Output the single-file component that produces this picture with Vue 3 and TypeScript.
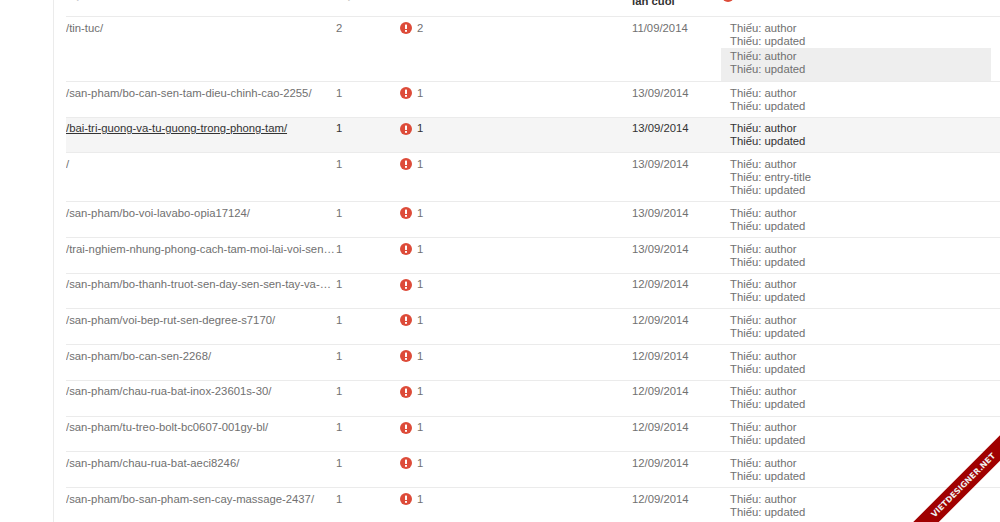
<script setup lang="ts">
interface Row {
  url: string
  pages: number
  errors: number
  date: string
  issues: string[][]
  hover?: boolean
}

const pair = ['Thiếu: author', 'Thiếu: updated']

const rows: Row[] = [
  { url: '/tin-tuc/', pages: 2, errors: 2, date: '11/09/2014', issues: [pair, pair] },
  { url: '/san-pham/bo-can-sen-tam-dieu-chinh-cao-2255/', pages: 1, errors: 1, date: '13/09/2014', issues: [pair] },
  { url: '/bai-tri-guong-va-tu-guong-trong-phong-tam/', pages: 1, errors: 1, date: '13/09/2014', issues: [pair], hover: true },
  { url: '/', pages: 1, errors: 1, date: '13/09/2014', issues: [['Thiếu: author', 'Thiếu: entry-title', 'Thiếu: updated']] },
  { url: '/san-pham/bo-voi-lavabo-opia17124/', pages: 1, errors: 1, date: '13/09/2014', issues: [pair] },
  { url: '/trai-nghiem-nhung-phong-cach-tam-moi-lai-voi-sen-tam-cay/', pages: 1, errors: 1, date: '13/09/2014', issues: [pair] },
  { url: '/san-pham/bo-thanh-truot-sen-day-sen-sen-tay-va-gia-do/', pages: 1, errors: 1, date: '12/09/2014', issues: [pair] },
  { url: '/san-pham/voi-bep-rut-sen-degree-s7170/', pages: 1, errors: 1, date: '12/09/2014', issues: [pair] },
  { url: '/san-pham/bo-can-sen-2268/', pages: 1, errors: 1, date: '12/09/2014', issues: [pair] },
  { url: '/san-pham/chau-rua-bat-inox-23601s-30/', pages: 1, errors: 1, date: '12/09/2014', issues: [pair] },
  { url: '/san-pham/tu-treo-bolt-bc0607-001gy-bl/', pages: 1, errors: 1, date: '12/09/2014', issues: [pair] },
  { url: '/san-pham/chau-rua-bat-aeci8246/', pages: 1, errors: 1, date: '12/09/2014', issues: [pair] },
  { url: '/san-pham/bo-san-pham-sen-cay-massage-2437/', pages: 1, errors: 1, date: '12/09/2014', issues: [pair] },
]
</script>

<template>
  <div class="viewport">
    <main class="panel">
      <div class="row head">
        <div class="one">Nội dung</div>
        <div class="one">Mục</div>
        <div class="one err-head">Có lỗi (số)</div>
        <div>Phát hiện<br />lần cuối</div>
        <div class="head-icon"><span class="head-dot"></span></div>
      </div>
      <div v-for="r in rows" :key="r.url" class="row" :class="{ hover: r.hover }">
        <div class="url">{{ r.url }}</div>
        <div>{{ r.pages }}</div>
        <div class="err">
          <svg class="icon" viewBox="0 0 12 12" aria-hidden="true">
            <circle cx="6" cy="6" r="6" fill="#dd4b39" />
            <rect x="5" y="2.4" width="2" height="4.6" rx=".5" fill="#fff" />
            <rect x="5" y="8" width="2" height="1.8" fill="#fff" />
          </svg>
          <span>{{ r.errors }}</span>
        </div>
        <div>{{ r.date }}</div>
        <div class="issues">
          <div v-for="(g, i) in r.issues" :key="i" class="group" :class="{ alt: i === 1 }">
            <div v-for="t in g" :key="t">{{ t }}</div>
          </div>
        </div>
      </div>
    </main>
    <div class="ribbon"><span>VIETDESIGNER.NET</span></div>
  </div>
</template>

<style>
html, body { margin: 0; background: #fff; overflow: hidden; }
</style>

<style scoped>
.viewport {
  position: relative;
  width: 1000px;
  height: 522px;
  overflow: hidden;
  font-family: "Liberation Sans", Arial, sans-serif;
  font-size: 11.3px;
  line-height: 13px;
  color: #707070;
}
.panel {
  box-sizing: border-box;
  width: 991px;
  margin-left: 53px;
  margin-top: -18px;
  padding-left: 12px;
  border-left: 1px solid #ebebeb;
  min-height: 600px;
}
.row {
  display: grid;
  grid-template-columns: 270px 64px 232px 89px 270px;
  border-bottom: 1px solid #ebebeb;
  padding-top: 4.6px;
  padding-bottom: 4.15px;
}
.row.head {
  height: 25.2px;
  padding: 0 0 8.8px;
  align-items: center;
  font-weight: 700;
  color: #333;
}
.row.head .one { margin-bottom: 2px; }
.row.head .err-head { color: #dd4b39; }
.head-icon { padding-left: 1px; }
.head-dot {
  display: block;
  width: 12px;
  height: 12px;
  border-radius: 50%;
  background: #dd4b39;
  transform: translateY(1px);
}
.row.hover { background: #f5f5f5; color: #333; }
.row.hover .url { text-decoration: underline; }
.url {
  white-space: nowrap;
  overflow: hidden;
  text-overflow: ellipsis;
}
.err { display: flex; align-items: flex-start; gap: 5px; }
.icon { width: 12px; height: 12px; flex: none; margin-top: 0.4px; }
.group { padding-left: 9px; }
.group.alt {
  background: #eee;
  margin-bottom: -4.15px;
  padding-top: 2px;
  padding-bottom: 5.4px;
}
.ribbon {
  position: absolute;
  left: 862.5px;
  top: 476px;
  width: 200px;
  height: 18px;
  background: #a00000;
  transform: rotate(-45deg);
  display: flex;
  align-items: center;
  justify-content: center;
  color: #eee;
  font-family: "DejaVu Sans", sans-serif;
  font-weight: 700;
  font-size: 8px;
}
</style>
